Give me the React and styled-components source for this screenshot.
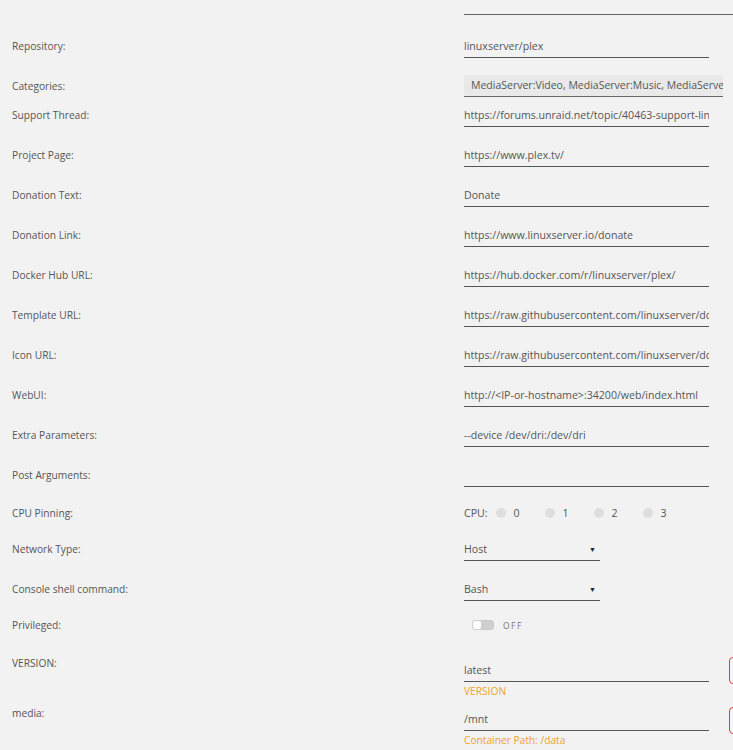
import React from 'react';
import styled, { createGlobalStyle } from 'styled-components';

const GlobalStyle = createGlobalStyle`
  html, body {
    margin: 0;
    padding: 0;
    overflow: hidden;
    background: #f2f2f2;
  }
  body {
    font-family: 'Open Sans', 'Noto Sans', sans-serif;
    color: #555;
  }
`;

const Page = styled.div`
  width: 800px;
  min-height: 750px;
  background: #f2f2f2;
`;

const TopField = styled.div`
  margin-left: 464px;
  width: 320px;
  height: 14px;
  border-bottom: 1px solid #666;
`;

const Row = styled.div`
  display: flex;
  align-items: flex-start;
  margin-top: ${(p) => p.$gap}px;
`;

const Label = styled.div`
  flex: 0 0 464px;
  box-sizing: border-box;
  padding-left: 12px;
  font-size: 10.2px;
  line-height: 22px;
  color: #555;
`;

const Field = styled.div`
  display: flex;
  flex-direction: column;
  margin-top: ${(p) => p.$offset || 0}px;
`;

const Input = styled.div`
  width: 245px;
  height: 22px;
  line-height: 22px;
  border-bottom: 1px solid #555;
  font-size: 10.6px;
  color: #555;
  white-space: nowrap;
  overflow: hidden;
`;

const TagBox = styled.div`
  width: 259px;
  height: 22px;
  line-height: 21px;
  box-sizing: border-box;
  padding-left: 7px;
  background: #e9e9e9;
  border-bottom: 1px solid #666;
  font-size: 10.5px;
  color: #555;
  white-space: nowrap;
  overflow: hidden;
`;

const Select = styled.div`
  display: flex;
  align-items: center;
  justify-content: space-between;
  width: 132px;
  height: 22px;
  border-bottom: 1px solid #555;
  font-size: 10.6px;
  color: #555;
  padding-right: 4px;
`;

const Arrow = styled.span`
  font-size: 7px;
  color: #222;
`;

const CpuList = styled.div`
  display: flex;
  align-items: center;
  height: 22px;
  font-size: 10.6px;
  color: #555;
`;

const CpuTitle = styled.span`
  margin-right: 8px;
`;

const Cpu = styled.label`
  display: flex;
  align-items: center;
  width: 49px;
  gap: 8px;
`;

const Dot = styled.span`
  width: 10px;
  height: 10px;
  border-radius: 50%;
  background: #dedede;
`;

const SwitchWrap = styled.div`
  display: flex;
  align-items: center;
  height: 22px;
  padding-left: 8px;
  gap: 9px;
`;

const Track = styled.span`
  display: flex;
  align-items: center;
  width: 22px;
  height: 10px;
  box-sizing: border-box;
  border: 1px solid #c8c8c8;
  border-radius: 3px;
  background: #cfcfcf;
`;

const Knob = styled.span`
  width: 10px;
  height: 10px;
  margin-left: -1px;
  border-radius: 3px;
  background: #fff;
  border: 1px solid #d0d0d0;
  box-sizing: border-box;
`;

const SwitchText = styled.span`
  font-size: 8.5px;
  letter-spacing: 1.5px;
  color: #777;
`;

const Hint = styled.div`
  font-size: 10.2px;
  line-height: 14px;
  margin-top: 2px;
  color: #f0a02c;
`;

const Action = styled.div`
  margin-left: 20px;
  margin-top: 5px;
  width: 60px;
  height: 27px;
  box-sizing: border-box;
  border: 1px solid #e0393e;
  border-radius: 4px;
  background: #f6f6f6;
`;

const textFields = [
  ['Support Thread:', 'https://forums.unraid.net/topic/40463-support-linuxserverio-plex-media-server/', 7],
  ['Project Page:', 'https://www.plex.tv/', 17],
  ['Donation Text:', 'Donate', 17],
  ['Donation Link:', 'https://www.linuxserver.io/donate', 17],
  ['Docker Hub URL:', 'https://hub.docker.com/r/linuxserver/plex/', 17],
  ['Template URL:', 'https://raw.githubusercontent.com/linuxserver/docker-templates/master/linuxserver.io/plex.xml', 17],
  ['Icon URL:', 'https://raw.githubusercontent.com/linuxserver/docker-templates/master/linuxserver.io/img/plex-icon.png', 17],
  ['WebUI:', 'http://<IP-or-hostname>:34200/web/index.html', 17],
  ['Extra Parameters:', '--device /dev/dri:/dev/dri', 17],
  ['Post Arguments:', '', 17],
];

const App = () => (
  <Page>
    <GlobalStyle />
    <TopField />

    <Row $gap={20}>
      <Label>Repository:</Label>
      <Input>linuxserver/plex</Input>
    </Row>

    <Row $gap={17}>
      <Label>Categories:</Label>
      <TagBox>MediaServer:Video, MediaServer:Music, MediaServer:Photos, MediaServer:Other</TagBox>
    </Row>

    {textFields.map(([label, value, gap]) => (
      <Row key={label} $gap={gap}>
        <Label>{label}</Label>
        <Input>{value}</Input>
      </Row>
    ))}

    <Row $gap={15}>
      <Label>CPU Pinning:</Label>
      <CpuList>
        <CpuTitle>CPU:</CpuTitle>
        {[0, 1, 2, 3].map((n) => (
          <Cpu key={n}>
            <Dot />
            {n}
          </Cpu>
        ))}
      </CpuList>
    </Row>

    <Row $gap={14}>
      <Label>Network Type:</Label>
      <Select>
        Host <Arrow>▼</Arrow>
      </Select>
    </Row>

    <Row $gap={17}>
      <Label>Console shell command:</Label>
      <Select>
        Bash <Arrow>▼</Arrow>
      </Select>
    </Row>

    <Row $gap={13}>
      <Label>Privileged:</Label>
      <SwitchWrap>
        <Track>
          <Knob />
        </Track>
        <SwitchText>OFF</SwitchText>
      </SwitchWrap>
    </Row>

    <Row $gap={16}>
      <Label>VERSION:</Label>
      <Field $offset={7}>
        <Input>latest</Input>
        <Hint>VERSION</Hint>
      </Field>
      <Action />
    </Row>

    <Row $gap={4}>
      <Label>media:</Label>
      <Field $offset={6}>
        <Input>/mnt</Input>
        <Hint>Container Path: /data</Hint>
      </Field>
      <Action />
    </Row>
  </Page>
);

export default App;
